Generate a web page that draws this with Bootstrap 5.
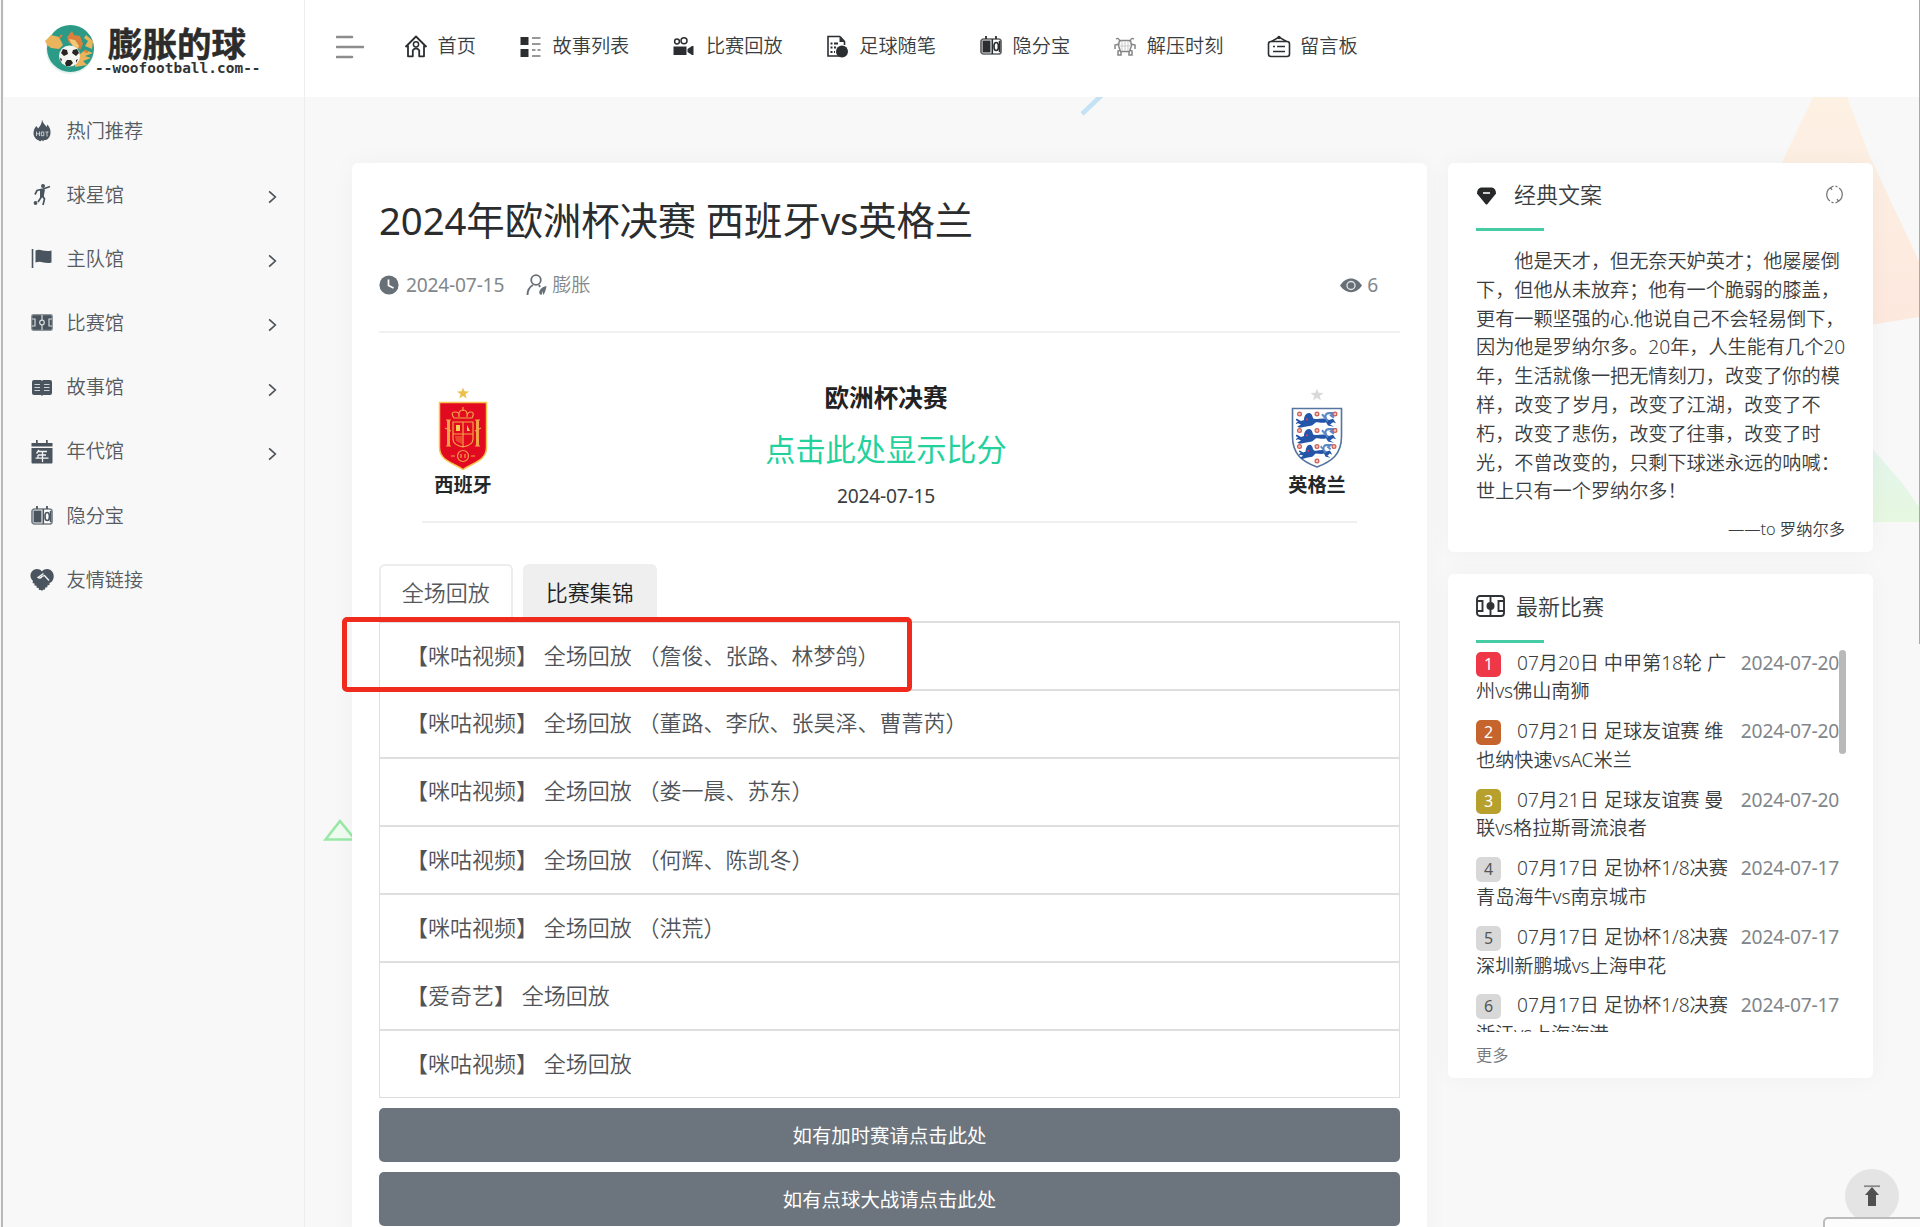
<!DOCTYPE html>
<html lang="zh-CN">
<head>
<meta charset="utf-8">
<meta name="viewport" content="width=device-width, initial-scale=1">
<title>2024年欧洲杯决赛 西班牙vs英格兰</title>
<link rel="stylesheet" href="https://cdn.jsdelivr.net/npm/bootstrap@5.3.0/dist/css/bootstrap.min.css">
<style>
html, body { height: 1227px; overflow: hidden; }
body { font-family: "Noto Sans", "Noto Sans CJK SC", sans-serif; font-size: 19.2px; font-weight: 350; line-height: 28.8px; color: #3a3d40; background: #f8f8f8; }
.page-frame { height: 1227px; position: relative; padding-left: 4px; }
.edge-l { position: absolute; left: 1px; top: 0; width: 2px; height: 1227px; background: #b9b9b9; z-index: 9; }
.edge-r { position: absolute; right: 0; top: 0; width: 1px; height: 644px; background: #a9a9a9; z-index: 9; }
.side-nav { width: 301px; border-right: 1px solid #eceeee; background: #f8f8f8; z-index: 2; }
.brand { height: 97px; background: #fff; padding-left: 41px; }
.brand-title { font-weight: 700; font-size: 34.5px; line-height: 35px; color: #2c2c2c; -webkit-text-stroke: .5px #2c2c2c; padding-left: 13px; font-family: "Noto Sans CJK SC", sans-serif; }
.brand-url { font: 700 14.4px/14px "DejaVu Sans Mono", monospace; color: #333; letter-spacing: .05px; margin-top: 1px; }
.side-item { height: 64.15px; padding: 0 27px 0 26px; color: #555b61; text-decoration: none; }
.side-item .glyph { width: 24px; height: 24px; margin-right: 12.5px; color: #4a545e; }
.side-item:first-child { margin-top: 2px; }
.top-bar { height: 97px; background: #fff; padding: 0 0 4px 31px; position: relative; z-index: 1; }
.burger { margin-right: 40px; }
.top-item { color: #3a3d40; text-decoration: none; margin-right: 43px; gap: 9.6px; }
.top-item svg { width: 24px; height: 24px; color: #2b2e31; }
.decor { position: absolute; left: 0; top: 0; z-index: 0; }
.content-area { padding: 66px 0 0 47px; gap: 21px; position: relative; z-index: 1; }
.panel { background: #fff; border-radius: 6px; box-shadow: 0 0 26px rgba(0,0,0,.035); }
.post { width: 1075px; height: 1080px; padding: 26px 27px 0; }
.post-title { font-size: 38.4px; line-height: 46px; margin: 8px 0 27px; color: #2a2c2e; font-weight: 400; letter-spacing: -.12px; white-space: nowrap; }
.meta { color: #82878b; height: 30px; padding-right: 22px; }
.meta svg { color: #687077; }
.num { letter-spacing: -.2px; font-weight: 400; }
.rule { border-top: 2px solid #f0f1f1; }
.match { margin: 51px 40px 0 41px; padding: 0; height: 137px; }
.match-rule { margin: 0 43px; border-top: 2px solid #efefef; }
.team { width: 86px; font-weight: 700; color: #24272a; }
.mid { margin: -4px 8px 0 0; }
.stage { font-size: 24.6px; font-weight: 700; color: #222; line-height: 36px; }
.reveal { font-size: 30.2px; line-height: 42px; color: #22d19b; font-weight: 400; }
.tabs { margin-top: 41px; gap: 10.5px; border: 0; }
.tabs .tab-cell { width: 133.5px; height: 57px; font-size: 22px; border: 2px solid #ececec; border-bottom: 0; border-radius: 6px 6px 0 0; color: #55595d; padding-bottom: 3px; }
.tabs .tab-cell.alt { background: #efefef; border-color: #efefef; color: #222; }
.play-rows { border: 1px solid #dedede; border-top-width: 2px; margin-bottom: 10px; }
.play-rows a { height: 68.05px; border-top: 2px solid #dfdfdf; font-size: 22px; color: #505458; text-decoration: none; padding: 0 0 2px 26px; white-space: pre; }
.play-rows a:first-child { border-top: 0; height: 65.8px; }
.hint-box { position: absolute; left: 342px; top: 617px; width: 570px; height: 75px; border: 5px solid #f02b1d; border-radius: 5px; z-index: 5; }
.extra { height: 54px; border: 0; border-radius: 5px; background: #6c757d; color: #fff; font-size: 19.4px; font-weight: 400; margin-bottom: 10px; padding: 0; }
.aside-col { width: 425px; }
.panel-a { height: 388.5px; padding: 15px 28px 0; margin-bottom: 22px; }
.panel-b { height: 504px; padding: 16px 27px 0 28px; }
.head-text { font-size: 22px; line-height: 32px; }
.bar { width: 68px; height: 3px; background: #45cca4; }
.quote { white-space: nowrap; margin: 16px 0 0; height: 268px; letter-spacing: -.04px; }
.sign { font-size: 16.3px; }
.feed { height: 384px; overflow: hidden; position: relative; margin-top: 5px; }
.feed-row { height: 68.6px; line-height: 28.8px; padding-top: 1px; letter-spacing: -.06px; }
.feed-row .when { color: #81868a; padding-right: 7px; }
.rank { display: inline-block; width: 25px; height: 25px; line-height: 25px; border-radius: 5px; text-align: center; font-size: 16px; font-weight: 400; color: #555; background: #d8d8d8; margin-right: 16px; vertical-align: 0; }
.r1 { background: #ee3847; color: #fff; } .r2 { background: #c6642d; color: #fff; } .r3 { background: #b7a02c; color: #fff; }
.thumb { position: absolute; right: 0; top: 2px; width: 7px; height: 104px; border-radius: 4px; background: #b9b9b9; }
.more { font-size: 16.2px; color: #74787c; margin-top: 9px; }
.to-top { position: absolute; left: 1845px; top: 1169px; width: 54px; height: 54px; border-radius: 50%; background: #e4e4e4; z-index: 3; }
.status-tip { position: absolute; left: 1823px; top: 1217px; width: 100px; height: 14px; border: 2px solid #bcbcbc; border-radius: 5px 0 0 0; background: #fcfcfc; z-index: 4; }
</style>
<script src="https://cdn.jsdelivr.net/npm/bootstrap@5.3.0/dist/js/bootstrap.bundle.min.js"></script>
</head>
<body>
<svg width="0" height="0" class="position-absolute">
  <symbol id="chev" viewBox="0 0 8 12"><path d="M1 1l5.500 5L1 11" fill="none" stroke="#4d5358" stroke-width="1.500"/></symbol>
  <symbol id="score" viewBox="0 0 24 24"><path d="M7 2v5M17 2v5" stroke="currentColor" stroke-width="1.800"/><rect x="2" y="5" width="20" height="15" rx="2.500" fill="#fff" stroke="currentColor" stroke-width="1.700" stroke-opacity=".75"/><path d="M3.500 6.500h8v12h-8z" fill="currentColor"/><path d="M13.300 5v15" stroke="currentColor" stroke-width="1.600"/><ellipse cx="17.200" cy="12.500" rx="2.200" ry="4" fill="none" stroke="currentColor" stroke-width="1.700"/><path d="M20.500 7v11" stroke="currentColor" stroke-width="1.500"/></symbol>
  <symbol id="star" viewBox="0 0 14 13"><path d="M7 0l1.700 4.500L14 4.800 9.800 8l1.500 5L7 10.100 2.700 13l1.500-5L0 4.800l5.300-.3z" fill="currentColor"/></symbol>
  <symbol id="lion" viewBox="0 0 42 15" preserveAspectRatio="none"><path d="M1 6l4 2 3-1c0-4 3-7 6-6 3 1 2 4 4 5 5 1 10-2 15 1l4-1 3 4-3-1-3 2 4 2-6-1-2-3c-3 1-7 0-10 0l-4 3-7 1-5 1-3-1 4-2-3-1-3 1 3-3-5-1z" fill="#2455a8"/><path d="M32 8c-4-3-3-7 1-7h5l-3 2 3 2M29 5l-3-3" fill="none" stroke="#5c88c8" stroke-width="2"/><circle cx="11" cy="6.500" r="1" fill="#e0405a"/></symbol>
</svg>
<div class="page-frame d-flex">
  <div class="edge-l"></div><div class="edge-r"></div>
  <svg class="decor" width="1920" height="1227">
    <defs><linearGradient id="pe" x1="0" y1="0" x2="0" y2="1"><stop offset="0" stop-color="#fdf1e4"/><stop offset="1" stop-color="#fde8de"/></linearGradient>
    <linearGradient id="gr" x1="0" y1="0" x2="0" y2="1"><stop offset="0" stop-color="#e3f5ec"/><stop offset="1" stop-color="#e6f8e0"/></linearGradient></defs>
    <path d="M1813 97h34l23 60 49 104v56l-49 8-120-10 33-155z" fill="url(#pe)"/>
    <path d="M1870 446l33 38 16 23v15h-49z" fill="url(#gr)"/>
    <path d="M1082 114l20-19" stroke="#c3e3f4" stroke-width="4.500"/>
    <path d="M325.500 839.500L340 821l15 18.500z" fill="#f0fbf2" stroke="#98e9a6" stroke-width="2.600"/>
  </svg>

  <nav class="side-nav flex-shrink-0">
    <div class="brand d-flex align-items-start">
      <svg width="50" height="50" viewBox="0 0 50 50" class="flex-shrink-0" style="margin-top:24px">
        <circle cx="25" cy="26" r="24" fill="#e4f2f0"/><circle cx="25.500" cy="24.500" r="23.500" fill="#2b9a86"/>
        <path d="M0 17l6-6 8 2 4 8-4 4-8-1-4-3z M41 11l7 6-1 8-7-3 3-5-4-3z M30 34l10-8 8 3-8 3 6 2-8 3 4 4-12 2z" fill="#e9b45c"/>
        <path d="M22 13l5-6 2 4 6 1 3 8-3 6-5-5-6-2z" fill="#d9803c"/><path d="M24 15l6 1 4 6-2 4-5-5z" fill="#f2c87a"/>
        <path d="M14 14l3-3M39 27l4 1" stroke="#d9803c" stroke-width="2"/>
        <circle cx="24.500" cy="32" r="10.500" fill="#f5f5f2"/><path d="M18 25l4 1 1 4-4 2-3-3z M28 26l4-1 2 4-3 3-4-3z M22 36l4 0 2 3-3 3h-4l-1-3z M15 34l2 1-1 3z M33 35l-2 1 0 3z" fill="#2a2422"/>
      </svg>
      <div class="d-flex flex-column text-nowrap" style="padding-top:25px">
        <div class="brand-title">膨胀的球</div>
        <div class="brand-url">--woofootball.com--</div>
      </div>
    </div>
    <div class="d-flex flex-column">
      <a class="side-item d-flex align-items-center"><svg class="glyph" viewBox="0 0 24 24"><path d="M12 .5c1 4 3 5 4.500 7.500l1-2.500c3 4 3 6 3 8.500 0 3-2 6-4.500 7h-2l-1 1.500L12 21l-2 1.500L9 21.500c-3-1-5.500-4-5.500-7s1-6 3-7.500l1.500 2.500c2-2 4-5 4-9z" fill="currentColor"/><path d="M6.500 12.500v4.500M9.500 12.500v4.500M6.500 14.800h3M11.300 13h2.500v3.700h-2.500zM15.500 13h3M17 13v4.500" stroke="#c5cace" stroke-width="1" fill="none"/></svg>热门推荐</a>
      <a class="side-item d-flex align-items-center"><svg class="glyph" viewBox="0 0 24 24"><circle cx="13" cy="3" r="2" fill="currentColor"/><circle cx="5.500" cy="20" r="1.900" fill="currentColor"/><path d="M5 11.500L7 7.500l6-1.500 7-2.500M13 6.500L12 13l-4 6M12 12l2.500 4-1.500 6" fill="none" stroke="currentColor" stroke-width="1.700"/><path d="M10 6.500h5l-1.500 8h-3.500z" fill="currentColor"/></svg>球星馆<svg class="ms-auto mt-1" width="9" height="14"><use href="#chev"/></svg></a>
      <a class="side-item d-flex align-items-center"><svg class="glyph" viewBox="0 0 24 24"><path d="M2.500 2v19" stroke="currentColor" stroke-width="1.600"/><path d="M5.500 3.500c5-2.500 8 2 16 0v12c-7 2-10-2.500-16 0z" fill="currentColor"/></svg>主队馆<svg class="ms-auto mt-1" width="9" height="14"><use href="#chev"/></svg></a>
      <a class="side-item d-flex align-items-center"><svg class="glyph" viewBox="0 0 24 24"><rect x="1.700" y="3.700" width="20.600" height="15.600" rx="1.500" fill="#4a545e" stroke="#8c969a" stroke-width="1.200"/><path d="M12 4v15M2 8h3v7H2M22 8h-3v7h3" fill="none" stroke="#d3dad9" stroke-width="1.200"/><circle cx="12" cy="11.500" r="2.300" fill="#4a545e" stroke="#d3dad9" stroke-width="1.200"/></svg>比赛馆<svg class="ms-auto mt-1" width="9" height="14"><use href="#chev"/></svg></a>
      <a class="side-item d-flex align-items-center"><svg class="glyph" viewBox="0 0 24 24"><path d="M4 4h7l1 1 1-1h7q2 0 2 2v11q0 2-2 2h-7l-1 1-1-1H4q-2 0-2-2V6q0-2 2-2z" fill="currentColor"/><path d="M4.500 8.500H10M4.500 11.500H10M4.500 14.500H10M14 8.500h5.500M14 11.500h5.500M14 14.500h5.500" stroke="#cdd2d5" stroke-width="1.200"/></svg>故事馆<svg class="ms-auto mt-1" width="9" height="14"><use href="#chev"/></svg></a>
      <a class="side-item d-flex align-items-center"><svg class="glyph" viewBox="0 0 24 24"><path d="M1.500 3H22.500v3.500h-21zM1.500 8H22.500v14.500q0 1-1 1H2.500q-1 0-1-1zM6 0h1.700v4H6zM16 0h1.700v4H16z" fill="currentColor"/><path d="M9 10L6.500 13.500M8 11.500h9M8 15h8M8 15v3.200M5.500 18.200h13M12.500 11.500v10.500" stroke="#f3f5f5" stroke-width="1.300" fill="none"/></svg>年代馆<svg class="ms-auto mt-1" width="9" height="14"><use href="#chev"/></svg></a>
      <a class="side-item d-flex align-items-center"><svg class="glyph"><use href="#score"/></svg>隐分宝</a>
      <a class="side-item d-flex align-items-center"><svg class="glyph" viewBox="0 0 24 24"><path d="M12 3.500C9 0 4 .5 1.500 4-.5 7 .5 11 3 13l-.5 2 2 .5 0 2 2 .2.200 2 2 .2.300 2 2 .1L12 23l1-1.200 2-.3.300-2 2-.3.200-2 2-.3v-2l2-.8C24 11 24.500 7 22.500 4 20 .5 15 0 12 3.500z" fill="currentColor"/><path d="M13.500 5.500L8 9.500q2 1.500 4-1l2.500-1 4.500 5" fill="none" stroke="#f8f9f9" stroke-width="1.300"/></svg>友情链接</a>
    </div>
  </nav>

  <div class="flex-grow-1" style="min-width:0">
    <header class="top-bar d-flex align-items-center">
      <svg class="burger" width="28" height="26" viewBox="0 0 28 26"><path d="M1 3h15M1 13h26M1 23h15" stroke="#8d8d8d" stroke-width="2.600" stroke-linecap="round"/></svg>
      <a class="top-item d-flex align-items-center"><svg viewBox="0 0 24 24"><path d="M4 11.500v10.800h4.800v-6q3.200-4 6.400 0v6H20V11.500M1.500 13L12 2.500 22.500 13" fill="none" stroke="currentColor" stroke-width="1.800" stroke-linejoin="round"/><circle cx="12" cy="10.300" r="2.600" fill="none" stroke="currentColor" stroke-width="1.500"/></svg>首页</a>
      <a class="top-item d-flex align-items-center"><svg viewBox="0 0 24 24"><path d="M1.500 3h8v8h-8zM1.500 15h8v8h-8z" fill="currentColor"/><path d="M13 4h8.500M13 10h8.500M13 16h3.500m2 0h3M13 22h8.500" stroke="#777" stroke-width="1.300"/></svg>故事列表</a>
      <a class="top-item d-flex align-items-center"><svg viewBox="0 0 24 24"><circle cx="5" cy="7.500" r="2.400" fill="none" stroke="currentColor" stroke-width="1.500"/><circle cx="12" cy="6.700" r="3" fill="none" stroke="currentColor" stroke-width="1.500"/><path d="M1.500 12.500h13v8.500h-13zM15.500 15l4.500-3h1.500v9H20l-4.500-3z" fill="currentColor"/></svg>比赛回放</a>
      <a class="top-item d-flex align-items-center"><svg viewBox="0 0 24 24"><path d="M14 2.500H2v19.500h12M14 2.500l4.500 5V11" fill="none" stroke="currentColor" stroke-width="1.600"/><path d="M13.500 3v5h5z" fill="currentColor"/><circle cx="16" cy="17.500" r="6" fill="currentColor"/><path d="M4.500 9.500h2M8 9.500h4M4.500 13.500h2M8 13.500h2M4.500 18h2M8 18h1" stroke="currentColor" stroke-width="2"/></svg>足球随笔</a>
      <a class="top-item d-flex align-items-center"><svg><use href="#score"/></svg>隐分宝</a>
      <a class="top-item d-flex align-items-center"><svg viewBox="0 0 24 24"><g fill="none" stroke="#858585" stroke-width="1.500"><path d="M6.500 6.500h11l1 5-2 6h-9l-2-6zM7 8q-1-5-4-3M17 8q1-5 4-3M6 10l-4 1v4M18 10l4 1v4M7 16l-2 1v4h3v-3M17 16l2 1v4h-3v-3"/><path d="M9 7v10M12 7v10M15 7v10M6 12h12" stroke="#c9c9c9" stroke-width="1"/></g></svg>解压时刻</a>
      <a class="top-item d-flex align-items-center"><svg viewBox="0 0 24 24"><rect x="1.500" y="7.500" width="21" height="15" rx="2.500" fill="none" stroke="currentColor" stroke-width="1.600"/><path d="M4.500 7.500L12 3 19.500 7.500M6 12.500h2M10 12.500h8M6 17.500h12" fill="none" stroke="currentColor" stroke-width="1.500"/><circle cx="12" cy="3.500" r="1.700" fill="currentColor"/></svg>留言板</a>
    </header>

    <main class="content-area d-flex align-items-start">
      <article class="panel post flex-shrink-0">
        <h1 class="post-title">2024年欧洲杯决赛 西班牙vs英格兰</h1>
        <div class="meta d-flex align-items-center">
          <svg width="20" height="20" viewBox="0 0 20 20" style="margin-right:7px"><circle cx="10" cy="10" r="9.600" fill="currentColor"/><path d="M9.500 4.500v6l5 2.500" fill="none" stroke="#fff" stroke-width="1.700"/></svg><span class="num">2024-07-15</span>
          <svg width="22" height="22" viewBox="0 0 22 22" style="margin:0 4px 0 22px"><circle cx="10" cy="6" r="4.800" fill="none" stroke="currentColor" stroke-width="1.800"/><path d="M1.500 21q0-7 5.500-10M13 11l1 2" fill="none" stroke="currentColor" stroke-width="1.900"/><path d="M13.500 20c-1-4 2-7 7-8-.5 4-2 8-3.500 9l0-4-1.500 4z" fill="currentColor"/></svg>膨胀
          <svg class="ms-auto" width="22" height="15" viewBox="0 0 22 15"><path d="M0 7.500C6-2 16-2 22 7.500c-6 9-16 9-22 0z" fill="currentColor"/><circle cx="11" cy="7.500" r="4" fill="#687077" stroke="#dfe2e3" stroke-width="1.400"/></svg><span class="num" style="margin-left:5px">6</span>
        </div>
        <div class="rule" style="margin-top:31px"></div>
        <div class="match d-flex justify-content-between">
          <div class="team d-flex flex-column align-items-center">
            <svg width="50" height="84" viewBox="0 0 50 84" style="margin-top:3px;color:#edc04b"><use href="#star" x="19" y="0" width="12" height="12"/><path d="M1.500 15.500h47v45c0 13-13 15-23.500 22-10.500-7-23.500-9-23.500-22z" fill="#e20a21" stroke="#f5c54e" stroke-width="1.500"/>
              <g fill="none" stroke="#f2a347" stroke-width="1.200"><path d="M16 31q-4-6 1-6t4 5q-1-7 4-7t4 7q0-5 4-5t1 6zM25 20v4M15 35h20v17q0 6-10 8-10-2-10-8zM15 47h20M25 35v25M8 33h5M8 59h5M37 33h5M37 59h5"/><path d="M10.500 33v26M39.500 33v26" stroke-width="3"/><path d="M7 41l6 3M43 41l-6 3"/><circle cx="25" cy="69" r="5.500"/><path d="M23 67v4M27 67v4M13 69h4M33 69h4"/></g><path d="M18 38h4v6h-4zM29 38l3 6h-3z" fill="#f4cf54"/><path d="M17 49h7v8l-6-3z" fill="#f07033" opacity=".6"/></svg>
            <span>西班牙</span>
          </div>
          <div class="mid d-flex flex-column align-items-center">
            <div class="stage">欧洲杯决赛</div>
            <div class="reveal" style="margin-top:13px">点击此处显示比分</div>
            <div class="num" style="margin-top:11px">2024-07-15</div>
          </div>
          <div class="team d-flex flex-column align-items-center">
            <svg width="52" height="84" viewBox="0 0 52 84" style="margin-top:3px;color:#d9d9d9"><use href="#star" x="19.500" y="1" width="13" height="13"/><path d="M1.500 21.500h49v28c0 18-10 25-24.500 30.500C11.500 74.500 1.500 67.500 1.500 49.500z" fill="#fff" stroke="#54759f" stroke-width="1.600"/>
              <use href="#lion" x="5" y="25" width="42" height="17"/><use href="#lion" x="5" y="41" width="42" height="17"/><use href="#lion" x="8" y="57" width="35" height="16"/>
              <g fill="#f3c3b5" stroke="#cc5e55" stroke-width="1.200"><circle cx="8.500" cy="27" r="1.900"/><circle cx="26" cy="27" r="1.900"/><circle cx="44" cy="27" r="1.900"/><circle cx="8.500" cy="43.500" r="1.900"/><circle cx="26" cy="43.500" r="1.900"/><circle cx="44" cy="43.500" r="1.900"/><circle cx="8.500" cy="59.500" r="1.900"/><circle cx="26" cy="59.500" r="1.900"/><circle cx="43" cy="59.500" r="1.900"/><circle cx="26" cy="74" r="1.900"/></g></svg>
            <span>英格兰</span>
          </div>
        </div>
        <div class="match-rule"></div>
        <div class="tabs d-flex">
          <div class="tab-cell d-flex align-items-center justify-content-center">全场回放</div>
          <div class="tab-cell alt d-flex align-items-center justify-content-center">比赛集锦</div>
        </div>
        <div class="play-rows d-flex flex-column">
          <a class="d-flex align-items-center">【咪咕视频】 全场回放 （詹俊、张路、林梦鸽）</a>
          <a class="d-flex align-items-center">【咪咕视频】 全场回放 （董路、李欣、张昊泽、曹菁芮）</a>
          <a class="d-flex align-items-center">【咪咕视频】 全场回放 （娄一晨、苏东）</a>
          <a class="d-flex align-items-center">【咪咕视频】 全场回放 （何辉、陈凯冬）</a>
          <a class="d-flex align-items-center">【咪咕视频】 全场回放 （洪荒）</a>
          <a class="d-flex align-items-center">【爱奇艺】 全场回放</a>
          <a class="d-flex align-items-center">【咪咕视频】 全场回放</a>
        </div>
        <button class="btn extra w-100 d-block">如有加时赛请点击此处</button>
        <button class="btn extra w-100 d-block">如有点球大战请点击此处</button>
      </article>

      <aside class="aside-col flex-shrink-0">
        <section class="panel panel-a">
          <div class="d-flex align-items-center head-text">
            <svg width="21" height="19" viewBox="0 0 21 19" class="mt-1"><path d="M5 .5h11q4 1 4 6L11.500 17q-1 1-2 0L1 6.500q0-5 4-6z" fill="#26282a"/><path d="M7 6h7" stroke="#d0d0d0" stroke-width="2"/></svg>
            <span style="margin-left:17px">经典文案</span>
            <svg class="ms-auto" style="margin-right:1px" width="19" height="19" viewBox="0 0 19 19"><g fill="none" stroke="#777" stroke-width="1.300"><path d="M6 2.500A8 8 0 0 0 5 16M13 16.500A8 8 0 0 0 14 3M8.500 1L5.500 2.700 7 5M10.500 18l3-1.700L12 14M10.500 1.200l2 .6M8.500 17.800l-2-.7"/></g></svg>
          </div>
          <div class="bar" style="margin-top:18px"></div>
          <p class="quote">&emsp;&emsp;他是天才，但无奈天妒英才；他屡屡倒<br>下，但他从未放弃；他有一个脆弱的膝盖，<br>更有一颗坚强的心.他说自己不会轻易倒下，<br>因为他是罗纳尔多。20年，人生能有几个20<br>年，生活就像一把无情刻刀，改变了你的模<br>样，改变了岁月，改变了江湖，改变了不<br>朽，改变了悲伤，改变了往事，改变了时<br>光，不曾改变的，只剩下球迷永远的呐喊：<br>世上只有一个罗纳尔多！</p>
          <div class="sign text-end">——to 罗纳尔多</div>
        </section>
        <section class="panel panel-b">
          <div class="d-flex align-items-center head-text">
            <svg width="29" height="22" viewBox="0 0 29 22"><g fill="none" stroke="#303336" stroke-width="1.900"><rect x="1" y="1" width="27" height="20" rx="3"/><path d="M14.500 1v20M1 6h5.500v10H1M28 6h-5.500v10H28"/></g><circle cx="14.500" cy="11" r="4" fill="#303336"/></svg>
            <span style="margin-left:11px">最新比赛</span>
          </div>
          <div class="bar" style="margin-top:18px"></div>
          <div class="feed">
            <div class="feed-row d-flex justify-content-between"><div class="text-nowrap"><span class="rank r1">1</span>07月20日 中甲第18轮 广<br>州vs佛山南狮</div><span class="when num">2024-07-20</span></div>
            <div class="feed-row d-flex justify-content-between"><div class="text-nowrap"><span class="rank r2">2</span>07月21日 足球友谊赛 维<br>也纳快速vsAC米兰</div><span class="when num">2024-07-20</span></div>
            <div class="feed-row d-flex justify-content-between"><div class="text-nowrap"><span class="rank r3">3</span>07月21日 足球友谊赛 曼<br>联vs格拉斯哥流浪者</div><span class="when num">2024-07-20</span></div>
            <div class="feed-row d-flex justify-content-between"><div class="text-nowrap"><span class="rank">4</span>07月17日 足协杯1/8决赛<br>青岛海牛vs南京城市</div><span class="when num">2024-07-17</span></div>
            <div class="feed-row d-flex justify-content-between"><div class="text-nowrap"><span class="rank">5</span>07月17日 足协杯1/8决赛<br>深圳新鹏城vs上海申花</div><span class="when num">2024-07-17</span></div>
            <div class="feed-row d-flex justify-content-between"><div class="text-nowrap"><span class="rank">6</span>07月17日 足协杯1/8决赛<br>浙江vs上海海港</div><span class="when num">2024-07-17</span></div>
            <div class="thumb"></div>
          </div>
          <div class="more">更多</div>
        </section>
      </aside>
    </main>
  </div>
  <div class="hint-box"></div>
  <div class="to-top d-flex align-items-center justify-content-center"><svg width="16" height="22" viewBox="0 0 16 22"><path d="M0 1.200h16" stroke="#8a8a8a" stroke-width="1.800"/><path d="M8 2l7 8h-3v11H4V10H1z" fill="#505050"/></svg></div>
  <div class="status-tip"></div>
</div>
</body>
</html>
